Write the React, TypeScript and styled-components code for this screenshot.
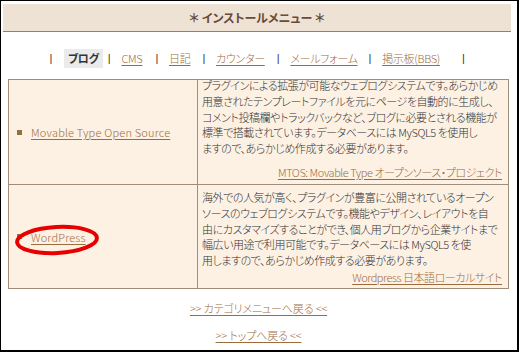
import React from "react";
import styled, { createGlobalStyle } from "styled-components";

const GlobalStyle = createGlobalStyle`
  html, body { margin: 0; padding: 0; background: #ffffff; }
  body {
    font-family: "Noto Sans CJK JP", "Liberation Sans", sans-serif;
    font-size: 11px;
    font-weight: 300;
    letter-spacing: -0.45px;
    color: #333333;
    font-feature-settings: "palt";
  }
`;

const Frame = styled.div`
  box-sizing: border-box;
  width: 519px;
  height: 352px;
  border-style: solid;
  border-color: #000000;
  border-width: 1px 2px 2px 1px;
  background: #ffffff;
  display: flex;
  flex-direction: column;
`;

const Header = styled.div`
  margin: 3px 6px 0 2px;
  height: 27px;
  background: #eee2d4;
  border-bottom: 1px solid #93806d;
  display: flex;
  align-items: center;
  justify-content: center;
  font-weight: bold;
  font-size: 12px;
  letter-spacing: 0;
  color: #6a4a3a;
`;

const NavBar = styled.div`
  margin: 17px 6px 0 2px;
  height: 19px;
  display: flex;
  align-items: center;
  justify-content: center;
  line-height: 19px;
  letter-spacing: -0.3px;
`;

const Sep = styled.span<{ $lead: number }>`
  margin-left: ${(p) => p.$lead}px;
  color: #333333;
  font-family: "Liberation Sans", sans-serif;
  font-weight: 400;
`;

const NavLink = styled.a`
  margin-left: 11px;
  color: #9c6c3e;
  text-decoration: underline;
  text-underline-offset: 2px;
`;

const Current = styled.span`
  margin-left: 12px;
  padding: 0 4px;
  background: #ebebeb;
  font-weight: bold;
  color: #333333;
`;

const Table = styled.div`
  margin: 11px 0 0 7px;
  width: 501px;
  box-sizing: border-box;
  display: grid;
  grid-template-columns: 189px minmax(0, 1fr);
  border-left: 1px solid #a08e7b;
  border-top: 1px solid #a08e7b;
  background: #fdf1e4;
`;

const Cell = styled.div<{ $h: number }>`
  box-sizing: border-box;
  height: ${(p) => p.$h}px;
  border-right: 1px solid #a08e7b;
  border-bottom: 1px solid #a08e7b;
`;

const LeftCell = styled(Cell)`
  display: flex;
  align-items: center;
  padding-left: 8px;
`;

const RightCell = styled(Cell)`
  display: flex;
  flex-direction: column;
  padding: 0 6px 0 4px;
`;

const ItemWrap = styled.div`
  position: relative;
  display: flex;
  align-items: center;
  line-height: 16px;
`;

const Bullet = styled.span`
  width: 5px;
  height: 5px;
  background: #94703f;
  margin-right: 9px;
`;

const ItemLink = styled.a`
  color: #9c6c3e;
  text-decoration: underline;
  text-underline-offset: 2px;
`;

const NameLink = styled(ItemLink)`
  letter-spacing: 0.2px;
`;

const Desc = styled.div<{ $top: number }>`
  margin-top: ${(p) => p.$top}px;
  margin-right: -4px;
  line-height: 15.75px;
  white-space: nowrap;
  color: #333333;
`;

const SiteLine = styled.div<{ $gap: number }>`
  margin-top: ${(p) => p.$gap}px;
  line-height: 16px;
  text-align: right;
`;

const Circle = styled.svg`
  position: absolute;
  left: -2px;
  top: -4px;
  overflow: visible;
  pointer-events: none;
`;

const Footer = styled.div`
  margin: 11px 0 0 7px;
  width: 501px;
  display: flex;
  flex-direction: column;
  align-items: center;
  gap: 11px;
  line-height: 16px;
  letter-spacing: -0.15px;
`;

const FooterLink = styled.a`
  color: #9c6c3e;
  text-decoration: underline;
  text-underline-offset: 2px;
`;

type Entry = {
  name: string;
  lines: string[];
  site: string;
  h: number;
  top: number;
  gap: number;
  circled?: boolean;
};

const entries: Entry[] = [
  {
    name: "Movable Type Open Source",
    lines: [
      "プラグインによる拡張が可能なウェブログシステムです。あらかじめ",
      "用意されたテンプレートファイルを元にページを自動的に生成し、",
      "コメント投稿欄やトラックバックなど、ブログに必要とされる機能が",
      "標準で搭載されています。データベースには MySQL5 を使用し",
      "ますので、あらかじめ作成する必要があります。",
    ],
    site: "MTOS: Movable Type オープンソース・プロジェクト",
    h: 105,
    top: -2,
    gap: 7,
  },
  {
    name: "WordPress",
    lines: [
      "海外での人気が高く、プラグインが豊富に公開されているオープン",
      "ソースのウェブログシステムです。機能やデザイン、レイアウトを自",
      "由にカスタマイズすることができ、個人用ブログから企業サイトまで",
      "幅広い用途で利用可能です。データベースには MySQL5 を使",
      "用しますので、あらかじめ作成する必要があります。",
    ],
    site: "Wordpress 日本語ローカルサイト",
    h: 104,
    top: 5,
    gap: 0,
    circled: true,
  },
];

export default function App() {
  return (
    <>
      <GlobalStyle />
      <Frame>
        <Header>＊ インストールメニュー ＊</Header>
        <NavBar>
          <Sep $lead={0}>|</Sep>
          <Current>ブログ</Current>
          <Sep $lead={5}>|</Sep>
          <NavLink href="#">CMS</NavLink>
          <Sep $lead={13}>|</Sep>
          <NavLink href="#">日記</NavLink>
          <Sep $lead={12}>|</Sep>
          <NavLink href="#">カウンター</NavLink>
          <Sep $lead={12}>|</Sep>
          <NavLink href="#">メールフォーム</NavLink>
          <Sep $lead={11}>|</Sep>
          <NavLink href="#">掲示板(BBS)</NavLink>
          <Sep $lead={22}>|</Sep>
        </NavBar>
        <Table>
          {entries.map((e) => (
            <React.Fragment key={e.name}>
              <LeftCell $h={e.h}>
                <ItemWrap>
                  <Bullet />
                  <NameLink href="#">{e.name}</NameLink>
                  {e.circled && (
                    <Circle width="84" height="30" viewBox="0 0 84 30">
                      <ellipse
                        cx="42"
                        cy="15"
                        rx="40"
                        ry="13"
                        fill="none"
                        stroke="#e60000"
                        strokeWidth="4"
                        transform="rotate(-3 42 15)"
                      />
                    </Circle>
                  )}
                </ItemWrap>
              </LeftCell>
              <RightCell $h={e.h}>
                <Desc $top={e.top}>
                  {e.lines.map((l, i) => (
                    <React.Fragment key={i}>
                      {l}
                      {i < e.lines.length - 1 && <br />}
                    </React.Fragment>
                  ))}
                </Desc>
                <SiteLine $gap={e.gap}>
                  <ItemLink href="#">{e.site}</ItemLink>
                </SiteLine>
              </RightCell>
            </React.Fragment>
          ))}
        </Table>
        <Footer>
          <FooterLink href="#">&gt;&gt; カテゴリメニューへ戻る &lt;&lt;</FooterLink>
          <FooterLink href="#">&gt;&gt; トップへ戻る &lt;&lt;</FooterLink>
        </Footer>
      </Frame>
    </>
  );
}
